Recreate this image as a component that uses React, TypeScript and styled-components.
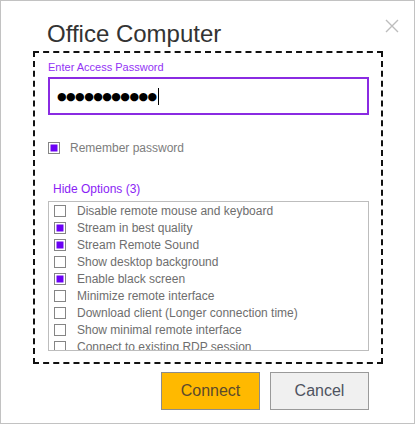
import { createGlobalStyle } from "styled-components";
import styled from "styled-components";

const GlobalStyle = createGlobalStyle`
  html, body {
    margin: 0;
    padding: 0;
    background: #ffffff;
  }

  body {
    font-family: "Liberation Sans", Arial, sans-serif;
  }
`;

const Window = styled.div`
  position: relative;
  box-sizing: border-box;
  width: 415px;
  height: 424px;
  border: 1px solid #c2c2c2;
  background: #ffffff;
  padding: 19px 0 0 32px;
`;

const CloseButton = styled.button`
  position: absolute;
  top: 17px;
  right: 14px;
  width: 16px;
  height: 16px;
  padding: 0;
  border: none;
  background: transparent;
  cursor: pointer;
`;

const Title = styled.h1`
  margin: 0 0 3px;
  padding-left: 14px;
  font-size: 24px;
  line-height: 28px;
  font-weight: 400;
  color: #333333;
`;

const OptionsPanel = styled.div`
  box-sizing: border-box;
  width: 350px;
  border: 2px dashed #111111;
  padding: 8px 12px 11px 13px;
`;

const FieldLabel = styled.label`
  display: block;
  font-size: 11px;
  line-height: 13px;
  color: #9333f5;
`;

const PasswordField = styled.div`
  box-sizing: border-box;
  display: flex;
  align-items: center;
  height: 38px;
  margin-top: 3px;
  padding-left: 7px;
  border: 2px solid #8a2be2;
  background: #ffffff;
`;

const Dots = styled.span`
  font-family: "DejaVu Sans", sans-serif;
  font-size: 11px;
  letter-spacing: -0.55px;
  color: #000000;
`;

const Caret = styled.span`
  width: 1px;
  height: 17px;
  margin-left: 1px;
  background: #000000;
`;

const CheckRow = styled.label<{ $compact?: boolean }>`
  display: flex;
  align-items: center;
  gap: ${({ $compact }) => ($compact ? "11px" : "10px")};
  height: ${({ $compact }) => ($compact ? "17px" : "14px")};
  font-size: 12px;
  color: ${({ $compact }) => ($compact ? "#6e6e6e" : "#7d7d7d")};
  white-space: nowrap;
`;

const RememberRow = styled(CheckRow)`
  margin-top: 26px;
`;

const Box = styled.span<{ $checked: boolean }>`
  box-sizing: border-box;
  flex: none;
  width: 12px;
  height: 12px;
  border: 1px solid #858585;
  background: ${({ $checked }) => ($checked ? "#6a00f4" : "#ffffff")};
  box-shadow: ${({ $checked }) =>
    $checked ? "inset 0 0 0 1.5px #ffffff" : "none"};
`;

const OptionsToggle = styled.div`
  margin-top: 27px;
  padding-left: 5px;
  font-size: 12px;
  line-height: 14px;
  color: #8a1ef5;
`;

const OptionList = styled.div`
  box-sizing: border-box;
  height: 150px;
  margin-top: 5px;
  padding: 0 0 4px 5px;
  border: 1px solid #bdbdbd;
  overflow-y: scroll;

  &::-webkit-scrollbar {
    width: 10px;
  }

  &::-webkit-scrollbar-track {
    background: #ffffff;
  }

  &::-webkit-scrollbar-thumb {
    background: #cbcbcb;
    border-radius: 5px;
    border: 2px solid #ffffff;
    border-left-width: 1px;
  }
`;

const Footer = styled.div`
  display: flex;
  justify-content: flex-end;
  gap: 10px;
  width: 336px;
  margin-top: 8px;
`;

const Button = styled.button<{ $primary?: boolean }>`
  box-sizing: border-box;
  width: 99px;
  height: 38px;
  border: 1px solid ${({ $primary }) => ($primary ? "#8c8c8c" : "#9a9a9a")};
  background: ${({ $primary }) => ($primary ? "#ffb900" : "#f0f0f0")};
  color: ${({ $primary }) => ($primary ? "#5b4a2c" : "#4e5360")};
  font-family: "Liberation Sans", Arial, sans-serif;
  font-size: 16px;
  cursor: pointer;
`;

const options = [
  { label: "Disable remote mouse and keyboard", checked: false },
  { label: "Stream in best quality", checked: true },
  { label: "Stream Remote Sound", checked: true },
  { label: "Show desktop background", checked: false },
  { label: "Enable black screen", checked: true },
  { label: "Minimize remote interface", checked: false },
  { label: "Download client (Longer connection time)", checked: false },
  { label: "Show minimal remote interface", checked: false },
  { label: "Connect to existing RDP session", checked: false },
];

export default function App() {
  return (
    <>
      <GlobalStyle />
      <Window>
        <CloseButton aria-label="Close">
          <svg width="16" height="16" viewBox="0 0 16 16">
            <path
              d="M2 2 L14 14 M14 2 L2 14"
              stroke="#bdbdbd"
              strokeWidth="1.4"
              fill="none"
            />
          </svg>
        </CloseButton>
        <Title>Office Computer</Title>
        <OptionsPanel>
          <FieldLabel>Enter Access Password</FieldLabel>
          <PasswordField>
            <Dots>●●●●●●●●●●●</Dots>
            <Caret />
          </PasswordField>
          <RememberRow>
            <Box $checked />
            Remember password
          </RememberRow>
          <OptionsToggle>Hide Options (3)</OptionsToggle>
          <OptionList>
            {options.map(({ label, checked }) => (
              <CheckRow $compact key={label}>
                <Box $checked={checked} />
                {label}
              </CheckRow>
            ))}
          </OptionList>
        </OptionsPanel>
        <Footer>
          <Button $primary>Connect</Button>
          <Button>Cancel</Button>
        </Footer>
      </Window>
    </>
  );
}
